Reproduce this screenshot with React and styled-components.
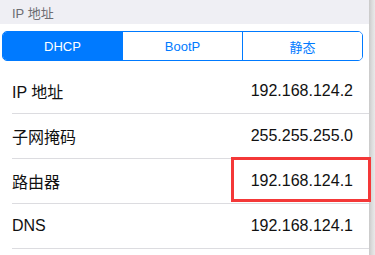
import React from "react";
import styled, { createGlobalStyle } from "styled-components";

const Global = createGlobalStyle`
  html, body { margin: 0; padding: 0; background: #fff; }
  body { font-family: "Liberation Sans", "Noto Sans CJK SC", sans-serif; -webkit-font-smoothing: antialiased; }
`;

const Frame = styled.div`
  display: flex;
  width: 375px;
  height: 255px;
  overflow: hidden;
`;

const Main = styled.div`
  width: 369px;
  display: flex;
  flex-direction: column;
  background: #fff;
`;

const Edge = styled.div`
  width: 6px;
  background: linear-gradient(to right, #c9c9c9, #dcdcdc 50%, #e9e9e9);
`;

const SectionHeader = styled.div`
  height: 24px;
  background: #efeff4;
  color: #6d6d72;
  font-size: 13px;
  display: flex;
  align-items: center;
  padding-left: 12px;
`;

const SegmentWrap = styled.div`
  padding: 7px 6px 8px 2px;
`;

const Segmented = styled.div`
  display: flex;
  height: 30px;
  box-sizing: border-box;
  border: 1px solid #007aff;
  border-radius: 5px;
  overflow: hidden;
`;

const Segment = styled.div`
  flex: 1;
  display: flex;
  align-items: center;
  justify-content: center;
  font-size: 13px;
  color: ${(p) => (p.$active ? "#fff" : "#007aff")};
  background: ${(p) => (p.$active ? "#007aff" : "#fff")};
  & + & { border-left: 1px solid #007aff; }
`;

const Row = styled.div`
  position: relative;
  height: 44px;
  margin-left: 12px;
  padding-right: 16px;
  border-bottom: 1px solid #dcdce0;
  display: flex;
  align-items: center;
  justify-content: space-between;
  font-size: 16px;
  color: #111;
`;

const Label = styled.span``;
const Value = styled.span``;

const Highlight = styled.div`
  position: absolute;
  left: 219px;
  right: -2px;
  top: -2px;
  bottom: 1px;
  border: 3px solid #f43838;
  pointer-events: none;
`;

const rows = [
  { label: "IP 地址", value: "192.168.124.2" },
  { label: "子网掩码", value: "255.255.255.0" },
  { label: "路由器", value: "192.168.124.1", mark: true },
  { label: "DNS", value: "192.168.124.1" },
];

export default function App() {
  return (
    <Frame>
      <Global />
      <Main>
        <SectionHeader>IP 地址</SectionHeader>
        <SegmentWrap>
          <Segmented>
            <Segment $active>DHCP</Segment>
            <Segment>BootP</Segment>
            <Segment>静态</Segment>
          </Segmented>
        </SegmentWrap>
        {rows.map((r) => (
          <Row key={r.label}>
            <Label>{r.label}</Label>
            <Value>{r.value}</Value>
            {r.mark && <Highlight />}
          </Row>
        ))}
      </Main>
      <Edge />
    </Frame>
  );
}
